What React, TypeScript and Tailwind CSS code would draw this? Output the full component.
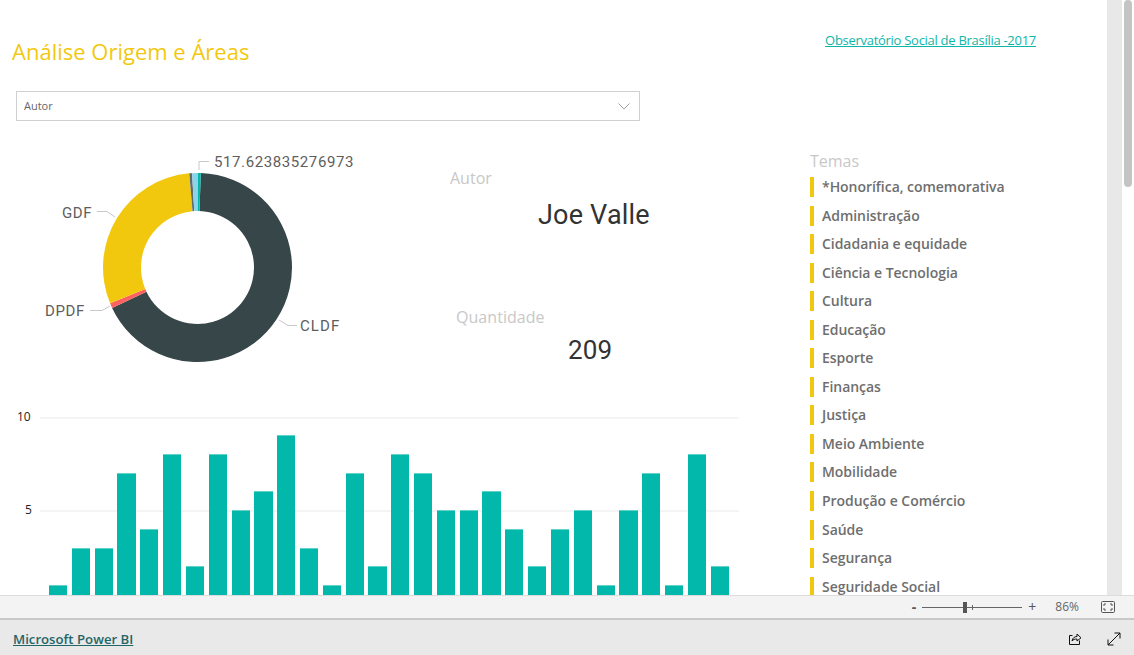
const themes = [
  '*Honorífica, comemorativa',
  'Administração',
  'Cidadania e equidade',
  'Ciência e Tecnologia',
  'Cultura',
  'Educação',
  'Esporte',
  'Finanças',
  'Justiça',
  'Meio Ambiente',
  'Mobilidade',
  'Produção e Comércio',
  'Saúde',
  'Segurança',
  'Seguridade Social',
];

const bars = [1, 3, 3, 7, 4, 8, 2, 8, 5, 6, 9, 3, 1, 7, 2, 8, 7, 5, 5, 6, 4, 2, 4, 5, 1, 5, 7, 1, 8, 2];

const din = "font-['Roboto','Liberation_Sans',sans-serif]";

// arc slice of the donut, angles in degrees clockwise from 12 o'clock
function slice(a0: number, a1: number, r0 = 56.5, r1 = 94.5) {
  const p = (r: number, a: number) => {
    const t = (a * Math.PI) / 180;
    return `${(197.5 + r * Math.sin(t)).toFixed(2)} ${(267.5 - r * Math.cos(t)).toFixed(2)}`;
  };
  const large = a1 - a0 > 180 ? 1 : 0;
  return `M${p(r1, a0)} A${r1} ${r1} 0 ${large} 1 ${p(r1, a1)} L${p(r0, a1)} A${r0} ${r0} 0 ${large} 0 ${p(r0, a0)} Z`;
}

function Donut() {
  return (
    <svg width="400" height="250" viewBox="0 140 400 250" className="block">
      <path d={slice(2, 244.7)} fill="#374649" />
      <path d={slice(244.7, 247.7)} fill="#fd625e" />
      <path d={slice(247.7, 355)} fill="#f2c80f" />
      <path d={slice(355, 356.7)} fill="#5f6b6d" />
      <path d={slice(356.7, 360.3)} fill="#8ad4eb" />
      <path d={slice(360.3, 362)} fill="#01b8aa" />
      <g fill="none" stroke="#c8c8c8" strokeWidth="1">
        <path d="M199 170 V161.500 H209" />
        <path d="M97 211.500 H107 L115 217" />
        <path d="M90 310.500 H102 L110 306" />
        <path d="M279 320 L288 325.500 H297" />
      </g>
      <g fill="#605e5c" fontFamily="Roboto, 'Liberation Sans', sans-serif" fontSize="15" letterSpacing="0.6">
        <text x="214" y="167">517.623835276973</text>
        <text x="62" y="218">GDF</text>
        <text x="45" y="316">DPDF</text>
        <text x="300" y="331" letterSpacing="1.1">CLDF</text>
      </g>
    </svg>
  );
}

export default function App() {
  return (
    <div className="flex h-[655px] w-[1134px] flex-col overflow-hidden bg-white font-['Open_Sans','Liberation_Sans',sans-serif]">
      <div className="flex h-[595px] shrink-0">
        <main className="h-full w-[1107px] overflow-hidden">
          <div className="flex items-start justify-between pr-[71px] pl-3">
            <h1 className="mt-[36px] text-[22px] leading-[30px] text-[#f2c80f]">Análise Origem e Áreas</h1>
            <a className="mt-[31px] text-[13px] leading-[18px] tracking-[-0.28px] text-[#0fb5a8] underline">
              Observatório Social de Brasília -2017
            </a>
          </div>

          <div className="mt-[25px] ml-4 flex h-[30px] w-[624px] items-center justify-between border border-[#d0d0d0] pr-[9px] pl-[7px] text-[11px] text-[#666666]">
            <span>Autor</span>
            <svg width="12" height="7" viewBox="0 0 12 7" fill="none" stroke="#a0a0a0">
              <path d="M.5.5 6 6 11.5.5" />
            </svg>
          </div>

          <div className="flex">
            <div className="w-[740px] shrink-0">
              <div className="mt-[19px] flex h-[250px]">
                <div className="w-[400px] shrink-0">
                  <Donut />
                </div>
                <div className="w-[340px]">
                  <p className="mt-[27px] ml-[50px] text-[16px] leading-[22px] text-[#c8c8c8]">Autor</p>
                  <p className={`mt-[8px] ml-[138px] text-[27px] leading-[36px] tracking-[0.2px] text-[#333333] ${din}`}>Joe Valle</p>
                  <p className="mt-[73px] ml-[56px] text-[16px] leading-[22px] tracking-[0.05px] text-[#c8c8c8]">Quantidade</p>
                  <p className={`mt-[4px] ml-[168px] text-[26px] leading-[36px] tracking-[0.2px] text-[#333333] ${din}`}>209</p>
                </div>
              </div>

              <div className="relative mt-[19px] h-[195px] pl-[38px]">
                <span className="absolute top-0 left-[17px] text-[12px] leading-[16px] text-[#222222]">10</span>
                <span className="absolute top-[93px] left-[25px] text-[12px] leading-[16px] text-[#222222]">5</span>
                <div className="absolute top-[8px] right-[1px] left-[40px] h-[2px] bg-[#f4f4f4]" />
                <div className="absolute top-[101px] right-[1px] left-[40px] h-[2px] bg-[#f4f4f4]" />
                <div className="relative flex h-full items-end gap-[4.63px] pl-[11px]">
                  {bars.map((b, i) => (
                    <div
                      key={i}
                      className="w-[18.2px] shrink-0 border-t border-[#5fd3c9] bg-[#01b8aa]"
                      style={{ height: b * 18.75 + 0.2 }}
                    />
                  ))}
                </div>
              </div>
            </div>

            <aside className="ml-[70px] flex-1">
              <p className="mt-[30px] text-[16px] leading-[20px] text-[#c8c8c8]">Temas</p>
              <ul className="mt-[6px]">
                {themes.map((t) => (
                  <li key={t} className="flex h-[28.55px] items-start">
                    <span className="h-5 w-1 shrink-0 bg-[#f2c80f]" />
                    <span className="ml-[8px] text-[14px] leading-[20px] font-semibold tracking-[-0.04px] text-[#6e6e6e]">{t}</span>
                  </li>
                ))}
              </ul>
            </aside>
          </div>
        </main>

        <div className="flex w-[27px] shrink-0">
          <div className="h-full w-[15px] bg-[#e8e8e8]" />
          <div className="ml-[2px] h-full w-[8px]">
            <div className="h-[187px] w-full rounded-[4px] bg-[#c4c4c4]" />
          </div>
        </div>
      </div>

      <div className="flex h-[23px] shrink-0 items-center justify-end border-t border-[#dcdcdc] bg-[#f3f3f3] pr-[19px] text-[#555555]">
        <span className="text-[14px] leading-none font-bold">-</span>
        <div className="relative mx-[6px] h-[1px] w-[100px] bg-[#666666]">
          <div className="absolute -top-[5px] left-[41px] h-[11px] w-1 bg-[#555555]" />
          <div className="absolute -top-[2px] left-[50px] h-[5px] w-[1px] bg-[#666666]" />
        </div>
        <span className="text-[14px] leading-none">+</span>
        <span className="ml-[19px] text-[12px] text-[#666666]">86%</span>
        <svg className="ml-[22px]" width="14" height="12" viewBox="0 0 14 12" fill="none" stroke="#555555">
          <rect x=".5" y=".5" width="13" height="11" rx="1" />
          <path d="M3 5V3h2M9 3h2v2M11 7v2H9M5 9H3V7" />
        </svg>
      </div>

      <div className="flex flex-1 items-center justify-between border-t-2 border-[#c8c8c8] bg-[#e9e9e9] px-[13px] pt-[2px]">
        <a className="mt-[2px] text-[13.2px] font-semibold text-[#1f6668] underline">Microsoft Power BI</a>
        <div className="flex items-center gap-[25px]">
          <svg width="14" height="14" viewBox="0 0 14 14" fill="none" stroke="#111111">
            <path d="M11.500 8.500v4h-10v-9h3" />
            <path d="M4 9c.5-3 2.500-4.500 5-4.500V2l4 3.800L9 9V7C7 7 5 7.500 4 9Z" />
          </svg>
          <svg width="14" height="14" viewBox="0 0 14 14" fill="none" stroke="#111111">
            <path d="M1 13 13 1M7.500 1H13v5.500M1 7.500V13h5.500" />
          </svg>
        </div>
      </div>
    </div>
  );
}
